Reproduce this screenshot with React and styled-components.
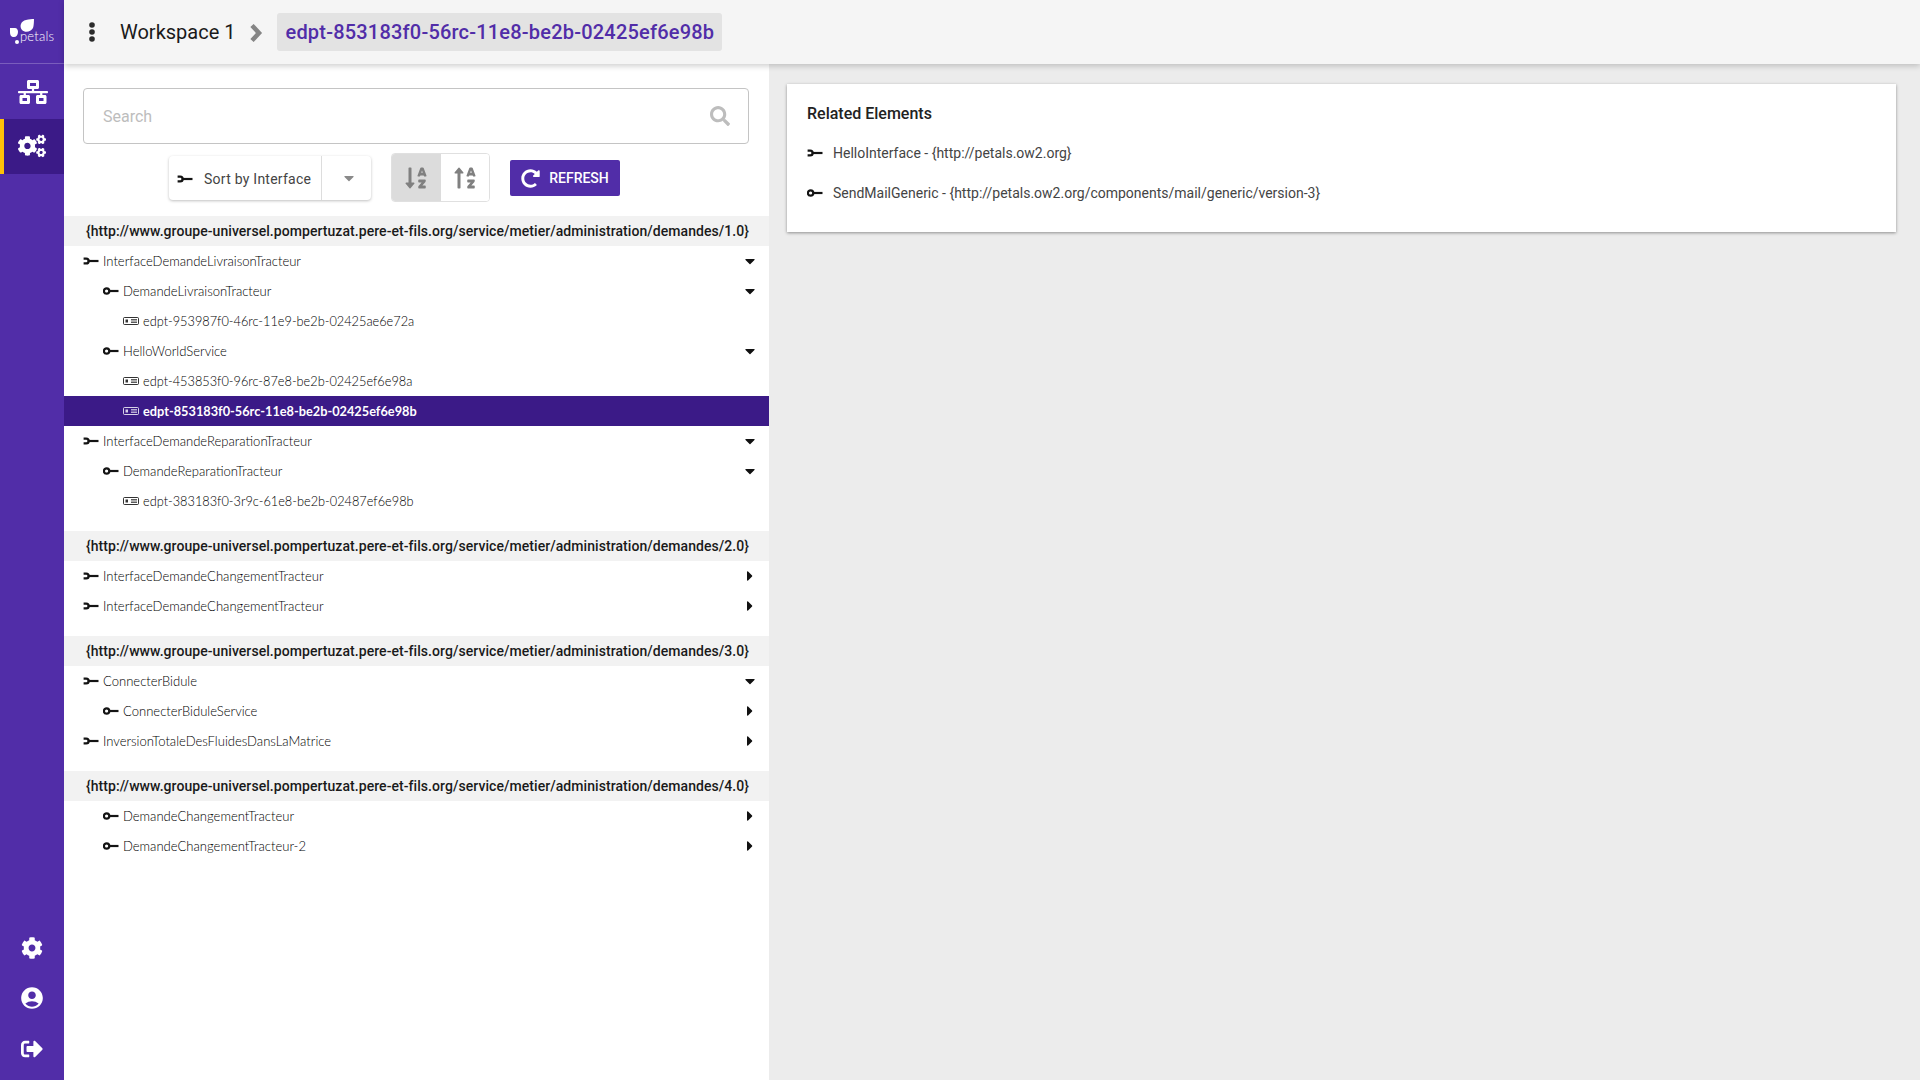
import React from "react";
import styled, { createGlobalStyle } from "styled-components";
import {
  FaNetworkWired,
  FaCogs,
  FaCog,
  FaSignOutAlt,
  FaSearch,
  FaSortAlphaDown,
  FaSortAlphaUp,
  FaRedoAlt,
  FaCaretDown,
  FaCaretRight,
} from "react-icons/fa";
import { MdAccountCircle } from "react-icons/md";

const purple = "#512da8";
const purpleDark = "#3b1a87";

const GlobalStyle = createGlobalStyle`
  html, body {
    margin: 0;
    padding: 0;
    height: 100%;
    overflow: hidden;
    font-family: Roboto, "Liberation Sans", sans-serif;
  }
  * { box-sizing: border-box; }
`;

const Page = styled.div`
  display: flex;
  width: 1920px;
  height: 1080px;
`;

const Sidebar = styled.nav`
  width: 64px;
  flex: none;
  background: ${purple};
  display: flex;
  flex-direction: column;
  color: #fff;
`;

const LogoBox = styled.div`
  position: relative;
  height: 64px;
  border-bottom: 1px solid #7a5dbd;
  flex: none;
`;

const LogoMark = styled.svg`
  position: absolute;
  left: 0;
  top: 0;
`;

const LogoText = styled.span`
  position: absolute;
  left: 20px;
  top: 28px;
  font-family: Lato, sans-serif;
  font-size: 13px;
  font-weight: 300;
  letter-spacing: 0.2px;
  color: #fff;
`;

const NavItem = styled.div`
  height: 55px;
  display: flex;
  align-items: center;
  justify-content: center;
  font-size: ${({ $size }) => $size || 28}px;
  background: ${({ $active }) => ($active ? purpleDark : "transparent")};
  border-left: ${({ $active }) => ($active ? "4px solid #ffc107" : "none")};
  padding: ${({ $active }) => ($active ? "0 4px 2px 0" : "0 0 0 2px")};
`;

const BottomNav = styled.div`
  margin-top: auto;
  padding-bottom: 6px;
  display: flex;
  flex-direction: column;
`;

const BottomItem = styled.div`
  height: 50.5px;
  display: flex;
  align-items: center;
  justify-content: center;
  font-size: ${({ $size }) => $size || 22}px;
`;

const Main = styled.div`
  flex: 1;
  display: flex;
  flex-direction: column;
  min-width: 0;
`;

const Header = styled.header`
  height: 64px;
  flex: none;
  background: #f5f5f5;
  display: flex;
  align-items: center;
  padding-left: 25px;
  box-shadow: 0 2px 6px rgba(0, 0, 0, 0.2);
  position: relative;
  z-index: 2;
`;

const Kebab = styled.svg`
  width: 6px;
  height: 20px;
  margin-right: 25px;
  fill: #2b2b2b;
`;

const Workspace = styled.span`
  font-size: 20px;
  color: #1a1a1a;
`;

const Crumb = styled.svg`
  width: 14px;
  height: 18px;
  margin: 2px 14px 0 14px;
`;

const CurrentCrumb = styled.span`
  background: #e3e3e3;
  color: ${purple};
  font-size: 20px;
  font-weight: 500;
  letter-spacing: 0.2px;
  height: 38px;
  line-height: 38px;
  padding: 0 8px;
  border-radius: 3px;
`;

const Content = styled.div`
  flex: 1;
  display: flex;
  min-height: 0;
`;

const LeftPanel = styled.section`
  width: 705px;
  flex: none;
  background: #fff;
  display: flex;
  flex-direction: column;
  padding-top: 24px;
`;

const SearchBox = styled.div`
  height: 56px;
  margin: 0 20px 0 19px;
  border: 1px solid #c4c4c4;
  border-radius: 4px;
  display: flex;
  align-items: center;
  justify-content: space-between;
  padding: 0 18px 0 19px;
  color: #bdbdbd;
  font-size: 16px;
`;

const SearchIcon = styled.span`
  display: flex;
  font-size: 20px;
`;

const Controls = styled.div`
  height: 72px;
  display: flex;
  align-items: flex-start;
  padding: 9px 0 0 105px;
`;

const SortSelect = styled.div`
  width: 202px;
  height: 44px;
  margin-top: 3px;
  display: flex;
  align-items: center;
  background: #fff;
  border-radius: 4px;
  box-shadow: 0 1px 3px rgba(0, 0, 0, 0.25);
  font-size: 14px;
  color: #444;
  letter-spacing: 0.25px;
`;

const SortLabel = styled.div`
  flex: 1;
  height: 100%;
  display: flex;
  align-items: center;
  gap: 7px;
  padding: 1px 0 0 8px;
  border-right: 1px solid #ddd;
`;

const SortCaret = styled.div`
  width: 49px;
  display: flex;
  justify-content: center;
  color: #8a8a8a;
  font-size: 16px;
  padding-left: 5px;
`;

const Toggle = styled.div`
  margin-left: 20px;
  width: 99px;
  height: 49px;
  display: flex;
  border: 1px solid #e0e0e0;
  border-radius: 4px;
  overflow: hidden;
`;

const ToggleButton = styled.div`
  flex: 1;
  display: flex;
  align-items: center;
  justify-content: center;
  font-size: 24px;
  color: #808080;
  background: ${({ $active }) => ($active ? "#dcdcdc" : "#fff")};
`;

const RefreshButton = styled.div`
  margin: 7px 0 0 20px;
  width: 110px;
  height: 36px;
  background: ${purple};
  color: #fff;
  border-radius: 2px;
  display: flex;
  align-items: center;
  justify-content: center;
  gap: 9px;
  font-size: 14px;
  font-weight: 500;
`;

const Tree = styled.div`
  display: flex;
  flex-direction: column;
`;

const Group = styled.div`
  margin-bottom: 15px;
`;

const GroupTitle = styled.div`
  height: 30px;
  background: #f2f2f2;
  display: flex;
  align-items: center;
  justify-content: center;
  font-size: 14px;
  font-weight: 500;
  letter-spacing: 0.06px;
  color: #1a1a1a;
  padding-left: 2px;
`;

const Row = styled.div`
  height: 30px;
  display: flex;
  align-items: center;
  padding: 0 11px 0 ${({ $level }) => 19 + $level * 20}px;
  background: ${({ $selected }) => ($selected ? purpleDark : "transparent")};
  color: ${({ $selected }) => ($selected ? "#fff" : "#000")};
  font-family: Lato, sans-serif;
  font-size: ${({ $level }) => ($level === 2 ? 12.75 : 13.05)}px;
  font-weight: ${({ $selected }) => ($selected ? 700 : 300)};
`;

const RowIcon = styled.svg`
  width: 16px;
  height: 12px;
  margin-right: 4px;
  flex: none;
`;

const RowLabel = styled.span`
  flex: 1;
`;

const RowCaret = styled.span`
  display: flex;
  color: #111;
  font-size: 16px;
`;

const RightPanel = styled.section`
  flex: 1;
  background-color: #ececec;
  padding: 20px 24px 0 18px;
`;

const Card = styled.div`
  height: 148px;
  background: #fff;
  box-shadow: 0 1px 3px rgba(0, 0, 0, 0.4);
  padding: 20px;
`;

const CardTitle = styled.div`
  font-size: 16px;
  font-weight: 500;
  color: #222;
  line-height: 19px;
  margin-bottom: 10px;
`;

const Related = styled.div`
  height: 40px;
  display: flex;
  align-items: center;
  gap: 6px;
  font-size: 14px;
  color: #444;
`;

function InterfaceIcon() {
  return (
    <RowIcon viewBox="0 0 16 12">
      <path d="M0.6 3.6 H3.2 A2.4 2.4 0 0 1 3.2 8.4 H0.6" fill="none" stroke="#141414" strokeWidth="2.4" />
      <path d="M6 6 H15.5" stroke="#141414" strokeWidth="2.2" />
    </RowIcon>
  );
}

function ServiceIcon() {
  return (
    <RowIcon viewBox="0 0 16 12">
      <circle cx="3.6" cy="6" r="2.7" fill="none" stroke="#141414" strokeWidth="2.2" />
      <path d="M6 6 H15.5" stroke="#141414" strokeWidth="2.2" />
    </RowIcon>
  );
}

function EndpointIcon() {
  return (
    <RowIcon viewBox="0 0 16 12">
      <rect x="0.5" y="2.5" width="15" height="7" rx="1" fill="none" stroke="currentColor" strokeWidth="1" opacity="0.8" />
      <rect x="2.5" y="4.5" width="2.5" height="3" fill="currentColor" opacity="0.8" />
      <path d="M8 4.5 H14 M8 6 H14 M8 7.5 H14" stroke="currentColor" strokeWidth="0.8" opacity="0.8" />
    </RowIcon>
  );
}

const kindIcons = { i: InterfaceIcon, s: ServiceIcon, e: EndpointIcon };
const ns = "{http://www.groupe-universel.pompertuzat.pere-et-fils.org/service/metier/administration/demandes/";

const groups = [
  {
    version: "1.0",
    rows: [
      ["i", 0, "InterfaceDemandeLivraisonTracteur", "down"],
      ["s", 1, "DemandeLivraisonTracteur", "down"],
      ["e", 2, "edpt-953987f0-46rc-11e9-be2b-02425ae6e72a"],
      ["s", 1, "HelloWorldService", "down"],
      ["e", 2, "edpt-453853f0-96rc-87e8-be2b-02425ef6e98a"],
      ["e", 2, "edpt-853183f0-56rc-11e8-be2b-02425ef6e98b", null, true],
      ["i", 0, "InterfaceDemandeReparationTracteur", "down"],
      ["s", 1, "DemandeReparationTracteur", "down"],
      ["e", 2, "edpt-383183f0-3r9c-61e8-be2b-02487ef6e98b"],
    ],
  },
  {
    version: "2.0",
    rows: [
      ["i", 0, "InterfaceDemandeChangementTracteur", "right"],
      ["i", 0, "InterfaceDemandeChangementTracteur", "right"],
    ],
  },
  {
    version: "3.0",
    rows: [
      ["i", 0, "ConnecterBidule", "down"],
      ["s", 1, "ConnecterBiduleService", "right"],
      ["i", 0, "InversionTotaleDesFluidesDansLaMatrice", "right"],
    ],
  },
  {
    version: "4.0",
    rows: [
      ["s", 1, "DemandeChangementTracteur", "right"],
      ["s", 1, "DemandeChangementTracteur-2", "right"],
    ],
  },
];

export default function App() {
  return (
    <Page>
      <GlobalStyle />
      <Sidebar>
        <LogoBox>
          <LogoMark width="64" height="64" viewBox="0 0 64 64">
            <path d="M34 19 C34 19 34 26 33 28 C31 32 25 33 22 30 C19 26 21 21 26 20 C29 19 32 19 34 19 Z" fill="#fff" />
            <path d="M10 28 H15 C17 28 18 30 18 32 C18 35 16 37 14 37 C11 37 10 35 10 32 Z" fill="#fff" />
            <circle cx="17" cy="42" r="2" fill="#fff" />
          </LogoMark>
          <LogoText>petals</LogoText>
        </LogoBox>
        <NavItem $size={30}>
          <FaNetworkWired />
        </NavItem>
        <NavItem $active>
          <FaCogs />
        </NavItem>
        <BottomNav>
          <BottomItem>
            <FaCog />
          </BottomItem>
          <BottomItem $size={26}>
            <MdAccountCircle />
          </BottomItem>
          <BottomItem>
            <FaSignOutAlt />
          </BottomItem>
        </BottomNav>
      </Sidebar>
      <Main>
        <Header>
          <Kebab viewBox="0 0 6 20">
            <circle cx="3" cy="3" r="2.8" />
            <circle cx="3" cy="10" r="2.8" />
            <circle cx="3" cy="17" r="2.8" />
          </Kebab>
          <Workspace>Workspace 1</Workspace>
          <Crumb viewBox="0 0 14 18">
            <path d="M3 1.5 L10 9 L3 16.5" fill="none" stroke="#858585" strokeWidth="4.5" />
          </Crumb>
          <CurrentCrumb>edpt-853183f0-56rc-11e8-be2b-02425ef6e98b</CurrentCrumb>
        </Header>
        <Content>
          <LeftPanel>
            <SearchBox>
              Search
              <SearchIcon>
                <FaSearch />
              </SearchIcon>
            </SearchBox>
            <Controls>
              <SortSelect>
                <SortLabel>
                  <InterfaceIcon />
                  Sort by Interface
                </SortLabel>
                <SortCaret>
                  <FaCaretDown />
                </SortCaret>
              </SortSelect>
              <Toggle>
                <ToggleButton $active>
                  <FaSortAlphaDown />
                </ToggleButton>
                <ToggleButton>
                  <FaSortAlphaUp />
                </ToggleButton>
              </Toggle>
              <RefreshButton>
                <FaRedoAlt size={19} />
                REFRESH
              </RefreshButton>
            </Controls>
            <Tree>
              {groups.map((group) => (
                <Group key={group.version}>
                  <GroupTitle>{`${ns}${group.version}}`}</GroupTitle>
                  {group.rows.map(([kind, level, label, caret, selected], i) => {
                    const Icon = kindIcons[kind];
                    return (
                      <Row key={i} $level={level} $selected={selected}>
                        <Icon />
                        <RowLabel>{label}</RowLabel>
                        {caret && <RowCaret>{caret === "down" ? <FaCaretDown /> : <FaCaretRight />}</RowCaret>}
                      </Row>
                    );
                  })}
                </Group>
              ))}
            </Tree>
          </LeftPanel>
          <RightPanel>
            <Card>
              <CardTitle>Related Elements</CardTitle>
              <Related>
                <InterfaceIcon />
                HelloInterface - {"{http://petals.ow2.org}"}
              </Related>
              <Related>
                <ServiceIcon />
                SendMailGeneric - {"{http://petals.ow2.org/components/mail/generic/version-3}"}
              </Related>
            </Card>
          </RightPanel>
        </Content>
      </Main>
    </Page>
  );
}
